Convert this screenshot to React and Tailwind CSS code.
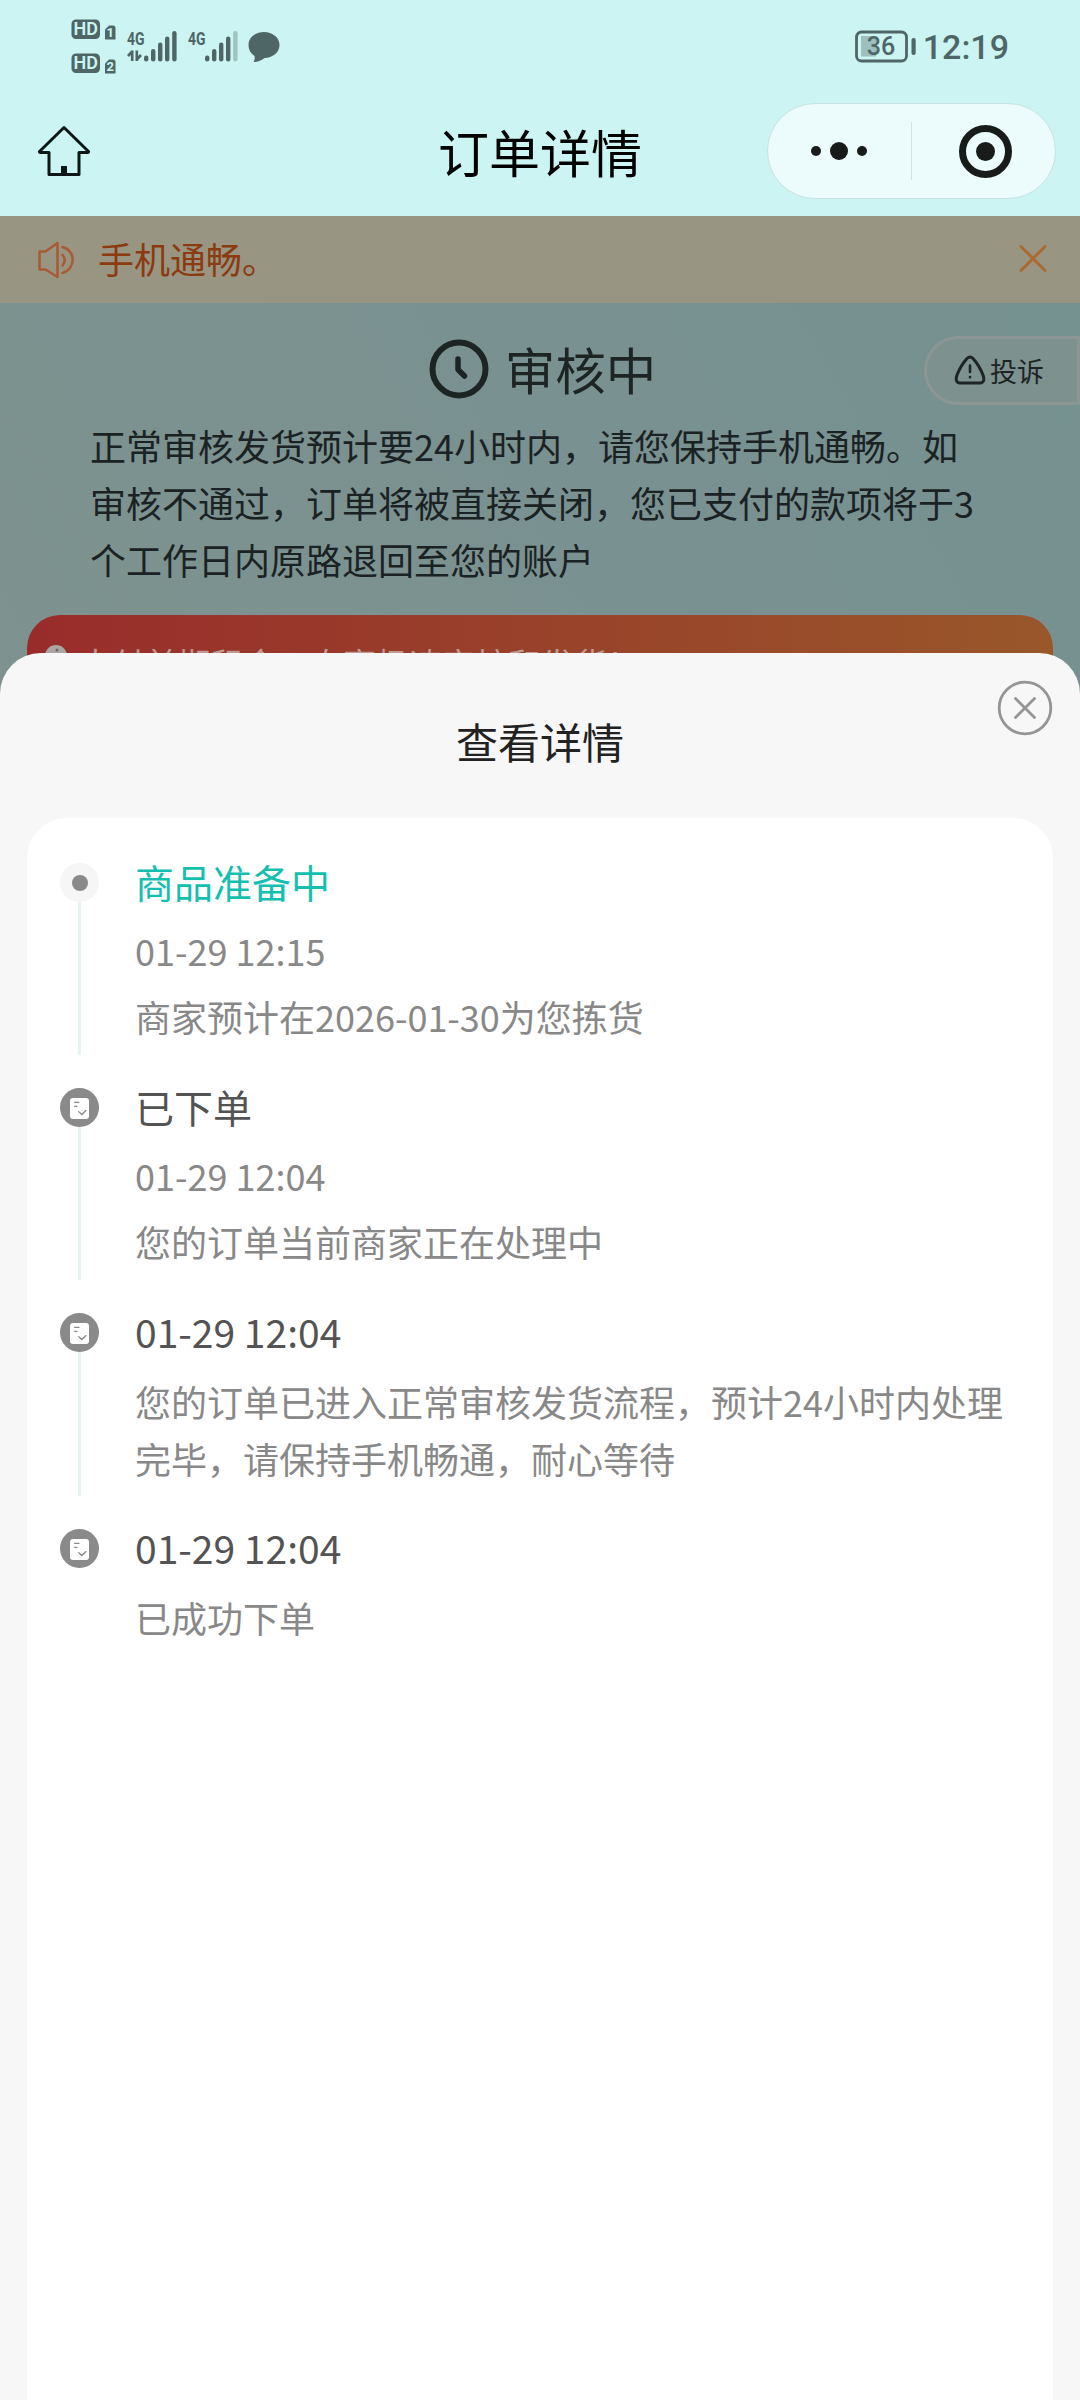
import React from 'react';

const timeline = [
  {
    title: '商品准备中',
    time: '01-29 12:15',
    desc: '商家预计在2026-01-30为您拣货',
    active: true,
    height: 'h-[225px]',
    line: 'h-[153px]',
  },
  {
    title: '已下单',
    time: '01-29 12:04',
    desc: '您的订单当前商家正在处理中',
    height: 'h-[225px]',
    line: 'h-[153px]',
  },
  {
    title: '01-29 12:04',
    desc: '您的订单已进入正常审核发货流程，预计24小时内处理完毕，请保持手机畅通，耐心等待',
    height: 'h-[216px]',
    line: 'h-[144px]',
  },
  {
    title: '01-29 12:04',
    desc: '已成功下单',
    height: 'h-[216px]',
  },
];

function HdBadge({ sim }) {
  return (
    <svg width="46" height="22" viewBox="0 0 46 22">
      <rect x="0.5" y="0.5" width="28.5" height="19.5" rx="4.5" fill="#4e6766" />
      <text x="14.8" y="16.2" textAnchor="middle" fontFamily="Roboto, sans-serif" fontWeight="600" fontSize="18" fill="#cbf4f2">HD</text>
      <path d="M34 10.5 L38 6.5 H42 Q44.5 6.5 44.5 9 V20.5 H34 Z" fill="#4e6766" />
      <text x="39.3" y="18.3" textAnchor="middle" fontFamily="Roboto, sans-serif" fontWeight="700" fontSize="13" fill="#cbf4f2">{sim}</text>
    </svg>
  );
}

function Signal({ weak, arrows }) {
  return (
    <svg className="overflow-visible" width="52" height="38" viewBox="0 -4 52 38">
      <text x="0" y="15.5" textLength="17.5" lengthAdjust="spacingAndGlyphs" fontFamily="Roboto, sans-serif" fontWeight="700" fontSize="19" fill="#4e6766">4G</text>
      {arrows && (
        <path d="M5.2 21.5 V32 M5.2 22.5 L1 27 M9.8 21.5 V32 M9.8 30.5 L14 26" stroke="#4e6766" strokeWidth="2.6" fill="none" />
      )}
      <g fill="#4e6766">
        <rect x="17" y="26.5" width="4.4" height="6" rx="2.2" />
        <rect x="24" y="20" width="4.4" height="12.5" rx="2.2" />
        <rect x="31" y="13.5" width="4.4" height="19" rx="2.2" />
        <rect x="38" y="7.5" width="4.4" height="25" rx="2.2" />
        <rect x="45.2" y="2" width="4.4" height="30.5" rx="2.2" opacity={weak ? 0.35 : 1} />
      </g>
    </svg>
  );
}

function StatusBar() {
  return (
    <div className="flex h-[94px] items-start justify-between px-[71px]">
      <div className="flex items-start">
        <div className="flex flex-col gap-3 pt-[19px]">
          <HdBadge sim="1" />
          <HdBadge sim="2" />
        </div>
        <div className="flex gap-[9px] pl-[10px] pt-[25px]">
          <Signal arrows />
          <Signal weak />
        </div>
        <svg className="ml-2 mt-[31px]" width="32" height="32" viewBox="0 0 32 32">
          <path d="M16 1 C24.5 1 31.5 6.5 31.5 14 C31.5 21.5 24.5 27 16.5 27 C14 29.5 9.5 31 5.5 31 C6.5 29.5 7 27.5 6.5 25 C2.5 22.5 0.5 18.5 0.5 14 C0.5 6.5 7.5 1 16 1 Z" fill="#4e6766" />
        </svg>
      </div>
      <div className="flex items-start">
        <svg className="mt-[30px]" width="62" height="34" viewBox="0 0 62 34">
          <rect x="1.5" y="2" width="50" height="29" rx="5" fill="none" stroke="#4e6766" strokeWidth="2.8" />
          <rect x="6" y="6" width="15" height="20.5" fill="#9dc0bf" />
          <rect x="56.5" y="8" width="4.2" height="17" rx="2" fill="#4e6766" />
          <text x="26" y="25" textAnchor="middle" fontFamily="Roboto, sans-serif" fontWeight="500" fontSize="25" fill="#4e6766">36</text>
        </svg>
        <span className="ml-[6px] mt-[27px] font-[Roboto,sans-serif] text-[34px] font-medium leading-[40px] text-[#4e6766]">12:19</span>
      </div>
    </div>
  );
}

function NavBar() {
  return (
    <div className="grid h-[122px] grid-cols-[1fr_auto_1fr] items-start">
      <svg className="ml-9 mt-[30px]" width="56" height="54" viewBox="0 0 56 54">
        <path d="M28 3.5 L3.5 27.5 Q3 28.5 4.5 28.5 H13 V50.5 H43 V28.5 H51.5 Q53 28.5 52.5 27.5 Z" fill="none" stroke="#0c1716" strokeWidth="3" strokeLinejoin="round" />
        <rect x="25" y="42" width="6" height="8" fill="#0c1716" />
      </svg>
      <h1 className="mt-[21px] text-[51px] leading-[72px] text-black">订单详情</h1>
      <div className="mr-6 mt-[9px] flex h-24 w-[289px] items-center justify-self-end rounded-full border border-[#c5e3e1] bg-[#ecfbfb]">
        <svg width="143" height="60" viewBox="0 0 143 60" fill="#171b1a">
          <circle cx="48" cy="30" r="5" />
          <circle cx="71" cy="30" r="9" />
          <circle cx="94" cy="30" r="5" />
        </svg>
        <div className="h-[58px] w-px bg-[#cfe3e2]" />
        <svg width="143" height="60" viewBox="0 0 143 60">
          <circle cx="73.5" cy="30.5" r="23" fill="none" stroke="#171b1a" strokeWidth="7" />
          <circle cx="73.5" cy="30.5" r="9.5" fill="#171b1a" />
        </svg>
      </div>
    </div>
  );
}

function Notice() {
  return (
    <div className="flex h-[87px] items-center bg-[#999583] pl-9">
      <svg width="40" height="40" viewBox="0 0 40 40" fill="none" stroke="#a85c34" strokeWidth="2.6" strokeLinejoin="round" strokeLinecap="round">
        <path d="M3.5 11.5 H9.5 L21.5 3 V37 L9.5 29.5 H3.5 Z" />
        <path d="M26.5 15 Q31 20 26.5 25.5" />
        <path d="M26.5 7 C40 10.5 40 29 26.5 33" />
      </svg>
      <span className="-mt-[3px] ml-[22px] text-[36px] leading-[52px] text-[#8c3a0f]">手机通畅。</span>
      <svg className="-mt-px ml-auto mr-[32px]" width="30" height="30" viewBox="0 0 30 30" stroke="#ac6a2f" strokeWidth="3" strokeLinecap="round">
        <path d="M3 2.5 L27 26.5 M27 2.5 L3 26.5" />
      </svg>
    </div>
  );
}

function OrderStatus() {
  return (
    <div className="h-[397px] bg-[linear-gradient(60deg,#7e938f_0%,#7a9191_50%,#759190_100%)] px-[27px] pt-[33px]">
      <div className="-mr-[27px] grid h-[79px] grid-cols-[1fr_auto_1fr] items-start">
        <div className="-ml-[27px]" />
        <div className="flex -translate-x-[11px] items-start">
          <svg className="mt-[3px]" width="60" height="60" viewBox="0 0 60 60" fill="none" stroke="#1d2424" strokeWidth="6">
            <circle cx="30" cy="30" r="26.5" />
            <path d="M29 20 V30.5 L35.5 37" strokeWidth="5.5" strokeLinecap="round" strokeLinejoin="round" />
          </svg>
          <span className="-mt-[2px] ml-4 text-[50.5px] leading-[68px] text-[#1d2424]">审核中</span>
        </div>
        <div className="flex h-[69px] w-[156px] items-center justify-self-end rounded-l-full border-[3px] border-[#8b9695] bg-[#7d918f] pl-[27px]">
          <svg width="32" height="32" viewBox="0 0 32 32" fill="none" stroke="#1d2424" strokeWidth="3" strokeLinecap="round">
            <path d="M13 3.5 Q16 0.5 19 3.5 Q25 10 29 20 Q31.5 27.5 26 28 H6 Q0.5 27.5 3 20 Q7 10 13 3.5 Z" />
            <path d="M16 10.5 V17 M16 22 V22.2" strokeWidth="2.6" />
          </svg>
          <span className="ml-[4px] text-[27px] leading-[40px] text-[#1d2424]">投诉</span>
        </div>
      </div>
      <p className="ml-[63px] w-[900px] pt-[2px] text-[36px] leading-[57px] text-[#1b2223]">
        正常审核发货预计要24小时内，请您保持手机通畅。如审核不通过，订单将被直接关闭，您已支付的款项将于3个工作日内原路退回至您的账户
      </p>
      <div className="mt-[27px] flex h-[95px] items-center rounded-[33px] bg-[linear-gradient(90deg,#992c2b,#99572a)] pl-[17px]">
        <svg className="-mt-[14px]" width="24" height="24" viewBox="0 0 24 24">
          <circle cx="12" cy="12" r="11" fill="#a9a7a5" />
          <circle cx="13" cy="6" r="1.5" fill="#6e6a68" />
        </svg>
        <span className="ml-[11px] text-[33px] leading-[48px] text-[#bf9a92]">支付前期租金，自享极速审核和发货！</span>
      </div>
    </div>
  );
}

function StepIcon({ active }) {
  if (active) {
    return (
      <div className="flex size-[39px] items-center justify-center rounded-full bg-[#f6f6f6]">
        <div className="size-4 rounded-full bg-[#8a8a8a]" />
      </div>
    );
  }
  return (
    <svg width="39" height="39" viewBox="0 0 39 39">
      <circle cx="19.5" cy="19.5" r="19.5" fill="#8a8a8a" />
      <rect x="10" y="10" width="19" height="21" rx="3" fill="#fff" />
      <path d="M14.5 14.3 H19 M14.5 18.3 H17" stroke="#8a8a8a" strokeWidth="1.3" strokeLinecap="round" />
      <path d="M18.7 23.6 L21.8 26.5 L26 22.6" stroke="#8a8a8a" strokeWidth="1.3" fill="none" strokeLinecap="round" />
    </svg>
  );
}

function TimelineItem({ item }) {
  return (
    <div className={`flex items-start ${item.height}`}>
      <div className="flex w-[39px] flex-col items-center">
        <StepIcon active={item.active} />
        {item.line && <div className={`w-[3px] bg-[#e6f4f2] ${item.line}`} />}
      </div>
      <div className="ml-[36px] w-[880px]">
        <h3 className={`-mt-[10px] text-[39px] leading-[57px] ${item.active ? 'text-[#14bfb1]' : 'text-[#535353]'}`}>
          {item.title}
        </h3>
        {item.time && <p className="mt-[12px] text-[36px] leading-[57px] text-[#888888]">{item.time}</p>}
        <p className={`text-[36px] leading-[57px] text-[#888888] ${item.time ? 'mt-[9px]' : 'mt-[13px]'}`}>{item.desc}</p>
      </div>
    </div>
  );
}

function DetailSheet() {
  return (
    <div className="absolute inset-x-0 bottom-0 top-[653px] flex flex-col rounded-t-[41px] bg-[#f7f7f7] px-[27px]">
      <div className="h-[165px] pt-[58px] text-center">
        <h2 className="text-[42px] leading-[60px] text-[#222222]">查看详情</h2>
        <svg className="absolute right-[27px] top-[27px]" width="56" height="56" viewBox="0 0 56 56" fill="none" stroke="#959595" strokeWidth="2.8" strokeLinecap="round">
          <circle cx="28" cy="28" r="25.8" />
          <path d="M18.5 18.5 L37.5 37.5 M37.5 18.5 L18.5 37.5" />
        </svg>
      </div>
      <div className="flex-1 rounded-t-[40px] bg-white pl-[33px] pt-[45px]">
        {timeline.map((item, i) => (
          <TimelineItem key={i} item={item} />
        ))}
      </div>
    </div>
  );
}

function App() {
  return (
    <div className="relative h-[2400px] w-[1080px] overflow-hidden bg-[#7e9390] font-['Noto_Sans_CJK_SC',sans-serif]">
      <div className="bg-[#cbf4f2]">
        <StatusBar />
        <NavBar />
      </div>
      <Notice />
      <OrderStatus />
      <DetailSheet />
    </div>
  );
}

export default App;
